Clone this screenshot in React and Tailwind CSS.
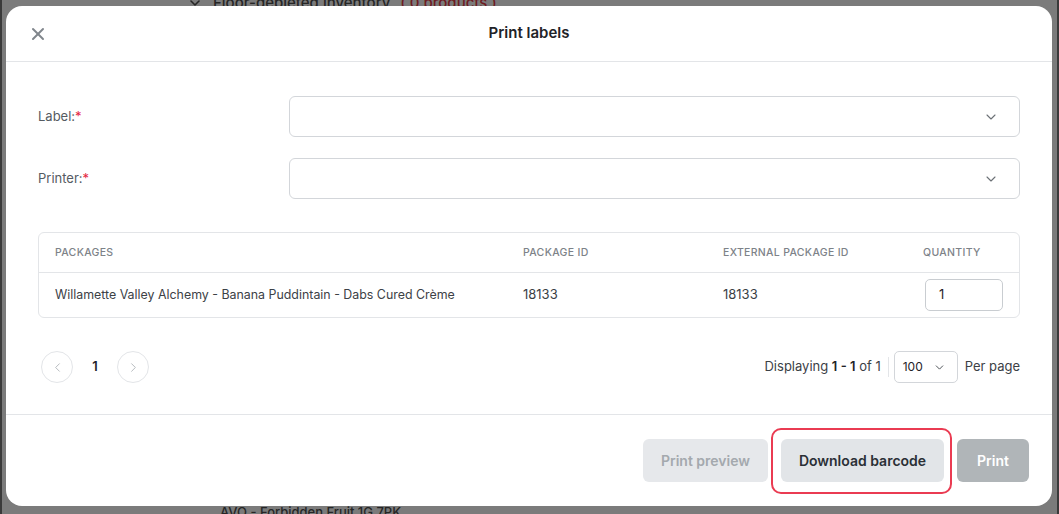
import React from "react";
import { X, ChevronDown, ChevronLeft, ChevronRight } from "lucide-react";

const rows = [
  {
    name: "Willamette Valley Alchemy - Banana Puddintain - Dabs Cured Crème",
    packageId: "18133",
    externalId: "18133",
    quantity: "1",
  },
];

const SelectField = ({ label }) => (
  <div className="grid grid-cols-[251px_1fr] items-center">
    <label className="text-[13px] text-[#555b62]">
      {label}:<span className="text-[#e5263f]">*</span>
    </label>
    <div className="h-[41px] rounded-[6px] border border-[#d3d6da] flex items-center justify-end pr-[20px]">
      <ChevronDown size={16} strokeWidth={1.6} className="text-[#6b7075]" />
    </div>
  </div>
);

const App = () => {
  return (
    <div
      className="w-[1059px] h-[514px] bg-[#7b7b7b] border-l-[2px] border-r-[2px] border-[#3a3a3a] pl-[4px] pt-[6px] overflow-hidden relative"
      style={{ fontFamily: "Inter, 'Noto Sans', sans-serif" }}
    >
      {/* page behind the overlay, mostly hidden */}
      <div className="absolute top-[-8px] left-[185px] flex items-center gap-[10px] text-[15px] text-[#262626] font-medium">
        <ChevronDown size={16} strokeWidth={2.4} />
        <span>Floor-depleted inventory</span>
        <span className="text-[#6e1c22]">( 0 products )</span>
      </div>
      <div className="absolute bottom-[-8px] left-[218px] text-[13px] text-[#262626] font-medium">
        AVO - Forbidden Fruit 1G 7PK
      </div>

      <div className="relative w-[1046px] h-[500px] bg-white rounded-[16px] flex flex-col">
        {/* header */}
        <div className="h-[56px] border-b border-[#e3e5e8] flex items-center relative">
          <button className="absolute left-[22px] text-[#80868c]">
            <X size={20} strokeWidth={2.4} />
          </button>
          <h2 className="w-full text-center text-[15px] font-semibold text-[#1f2328]">
            Print labels
          </h2>
        </div>

        {/* body */}
        <div className="px-8 pt-[34px] flex flex-col">
          <div className="flex flex-col gap-[21px]">
            <SelectField label="Label" />
            <SelectField label="Printer" />
          </div>

          <div className="mt-[33px] border border-[#e3e5e8] rounded-[6px]">
            <div className="grid grid-cols-[468px_200px_200px_1fr] h-[40px] items-center px-4 border-b border-[#e3e5e8] text-[10.5px] tracking-[0.03em] text-[#7d8288] font-medium uppercase">
              <div>Packages</div>
              <div>Package ID</div>
              <div>External Package ID</div>
              <div>Quantity</div>
            </div>
            {rows.map((row, i) => (
              <div
                key={i}
                className="grid grid-cols-[468px_200px_200px_1fr] h-[44px] items-center px-4 text-[13px] text-[#3c4146]"
              >
                <div className="text-[12.4px]">{row.name}</div>
                <div>{row.packageId}</div>
                <div>{row.externalId}</div>
                <div>
                  <div className="ml-[2px] w-[78px] h-[32px] border border-[#c9cdd1] rounded-[5px] flex items-center pl-[13px] text-[#1f2328]">
                    {row.quantity}
                  </div>
                </div>
              </div>
            ))}
          </div>

          {/* pagination */}
          <div className="mt-[33px] flex items-center justify-between pl-[3px]">
            <div className="flex items-center">
              <div className="w-[32px] h-[32px] rounded-full border border-[#e3e5e8] flex items-center justify-center text-[#b8bcc0]">
                <ChevronLeft size={15} strokeWidth={1.6} />
              </div>
              <span className="w-[44px] text-center text-[13px] font-semibold text-[#1f2328]">
                1
              </span>
              <div className="w-[32px] h-[32px] rounded-full border border-[#e3e5e8] flex items-center justify-center text-[#b8bcc0]">
                <ChevronRight size={15} strokeWidth={1.6} />
              </div>
            </div>
            <div className="flex items-center text-[13px] text-[#3c4146]">
              <span>
                Displaying <span className="font-semibold text-[#1f2328]">1 - 1</span> of 1
              </span>
              <span className="w-px h-[20px] bg-[#e3e5e8] ml-[7px] mr-[5px]" />
              <div className="w-[64px] h-[32px] border border-[#d3d6da] rounded-[5px] flex items-center pl-[8px] gap-[10px] text-[12px] text-[#1f2328]">
                100
                <ChevronDown size={13} strokeWidth={1.8} className="text-[#4b5055]" />
              </div>
              <span className="ml-[7px]">Per page</span>
            </div>
          </div>
        </div>

        {/* footer */}
        <div className="mt-auto border-t border-[#e3e5e8] h-[92px] flex items-center justify-end gap-[13px] pr-[23px]">
          <button className="w-[125px] h-[43px] rounded-[6px] bg-[#e6e8eb] text-[14px] font-semibold text-[#a4a9ae]">
            Print preview
          </button>
          <div className="relative">
            <button className="w-[163px] h-[43px] rounded-[6px] bg-[#e2e5e8] text-[14px] font-semibold text-[#2b3036]">
              Download barcode
            </button>
            <div className="absolute left-[-10px] right-[-8px] top-[-11px] bottom-[-12px] border-[2px] border-[#ea3b52] rounded-[10px] pointer-events-none" />
          </div>
          <button className="w-[72px] h-[43px] rounded-[6px] bg-[#b0b5b8] text-[14px] font-semibold text-white">
            Print
          </button>
        </div>
      </div>
    </div>
  );
};

export default App;
